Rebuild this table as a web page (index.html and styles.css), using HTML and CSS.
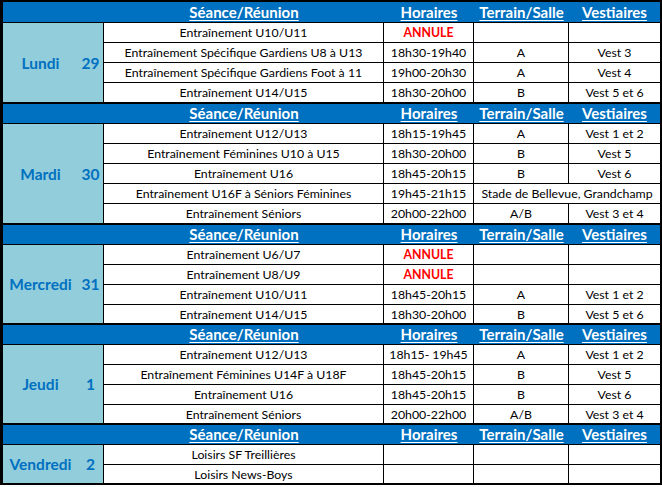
FILE: index.html
```html
<!DOCTYPE html>
<html lang="fr">
<head>
<meta charset="utf-8">
<title>Planning</title>
<link rel="stylesheet" href="styles.css">
</head>
<body>
<div class="sheet">
  <div class="block b1">
    <div class="head"><span></span><span class="h">Séance/Réunion</span><span class="h">Horaires</span><span class="h">Terrain/Salle</span><span class="h">Vestiaires</span></div>
    <div class="day r4"><span class="dn">Lundi</span><span class="dd">29</span></div>
    <div class="c">Entraînement U10/U11</div><div class="c annule">ANNULE</div><div class="c"></div><div class="c"></div>
    <div class="c">Entraînement Spécifique Gardiens U8 à U13</div><div class="c">18h30-19h40</div><div class="c">A</div><div class="c">Vest 3</div>
    <div class="c">Entraînement Spécifique Gardiens Foot à 11</div><div class="c">19h00-20h30</div><div class="c">A</div><div class="c">Vest 4</div>
    <div class="c">Entraînement U14/U15</div><div class="c">18h30-20h00</div><div class="c">B</div><div class="c">Vest 5 et 6</div>
  </div>
  <div class="block b2">
    <div class="head"><span></span><span class="h">Séance/Réunion</span><span class="h">Horaires</span><span class="h">Terrain/Salle</span><span class="h">Vestiaires</span></div>
    <div class="day r5"><span class="dn">Mardi</span><span class="dd">30</span></div>
    <div class="c">Entraînement U12/U13</div><div class="c">18h15-19h45</div><div class="c">A</div><div class="c">Vest 1 et 2</div>
    <div class="c">Entraînement Féminines U10 à U15</div><div class="c">18h30-20h00</div><div class="c">B</div><div class="c">Vest 5</div>
    <div class="c">Entraînement U16</div><div class="c">18h45-20h15</div><div class="c">B</div><div class="c">Vest 6</div>
    <div class="c">Entraînement U16F à Séniors Féminines</div><div class="c">19h45-21h15</div><div class="c wide">Stade de Bellevue, Grandchamp</div>
    <div class="c">Entraînement Séniors</div><div class="c">20h00-22h00</div><div class="c">A/B</div><div class="c">Vest 3 et 4</div>
  </div>
  <div class="block b4r">
    <div class="head"><span></span><span class="h">Séance/Réunion</span><span class="h">Horaires</span><span class="h">Terrain/Salle</span><span class="h">Vestiaires</span></div>
    <div class="day r4"><span class="dn">Mercredi</span><span class="dd">31</span></div>
    <div class="c">Entraînement U6/U7</div><div class="c annule">ANNULE</div><div class="c"></div><div class="c"></div>
    <div class="c">Entraînement U8/U9</div><div class="c annule">ANNULE</div><div class="c"></div><div class="c"></div>
    <div class="c">Entraînement U10/U11</div><div class="c">18h45-20h15</div><div class="c">A</div><div class="c">Vest 1 et 2</div>
    <div class="c">Entraînement U14/U15</div><div class="c">18h30-20h00</div><div class="c">B</div><div class="c">Vest 5 et 6</div>
  </div>
  <div class="block b4r">
    <div class="head"><span></span><span class="h">Séance/Réunion</span><span class="h">Horaires</span><span class="h">Terrain/Salle</span><span class="h">Vestiaires</span></div>
    <div class="day r4"><span class="dn">Jeudi</span><span class="dd">1</span></div>
    <div class="c">Entraînement U12/U13</div><div class="c">18h15- 19h45</div><div class="c">A</div><div class="c">Vest 1 et 2</div>
    <div class="c">Entraînement Féminines U14F à U18F</div><div class="c">18h45-20h15</div><div class="c">B</div><div class="c">Vest 5</div>
    <div class="c">Entraînement U16</div><div class="c">18h45-20h15</div><div class="c">B</div><div class="c">Vest 6</div>
    <div class="c">Entraînement Séniors</div><div class="c">20h00-22h00</div><div class="c">A/B</div><div class="c">Vest 3 et 4</div>
  </div>
  <div class="block b2r">
    <div class="head"><span></span><span class="h">Séance/Réunion</span><span class="h">Horaires</span><span class="h">Terrain/Salle</span><span class="h">Vestiaires</span></div>
    <div class="day r2"><span class="dn">Vendredi</span><span class="dd">2</span></div>
    <div class="c">Loisirs SF Treillières</div><div class="c"></div><div class="c"></div><div class="c"></div>
    <div class="c">Loisirs News-Boys</div><div class="c"></div><div class="c"></div><div class="c"></div>
  </div>
</div>
</body>
</html>
```
FILE: styles.css
```css
html, body {
  margin: 0;
  padding: 0;
  background: #ffffff;
}
body {
  font-family: Lato, "Liberation Sans", sans-serif;
  color: #000;
}
.sheet {
  width: 657px;
  background: #000;
  padding: 2px 2px 2px 3px;
  display: flex;
  flex-direction: column;
  gap: 2px;
}
.block {
  display: grid;
  grid-template-columns: 100px 279px 89px 94px 91px;
  grid-auto-rows: 19px;
  gap: 1px;
  background: #000;
}
.b1 { grid-template-rows: 20px repeat(4, 19px); }
.b2 { grid-template-rows: repeat(6, 19px); }
.b4r { grid-template-rows: repeat(4, 19px) 18px; }
.b2r { grid-template-rows: 19px 19px 18px; }
.head {
  grid-column: 1 / -1;
  grid-row: 1;
  background: #0070c0;
  display: grid;
  grid-template-columns: 101px 280px 90px 95px 91px;
  align-items: center;
}
.h {
  text-align: center;
  color: #fff;
  font-weight: 700;
  font-size: 15px;
  text-decoration: underline;
  text-decoration-thickness: 1px;
  text-underline-offset: 2px;
  line-height: 19px;
}
.day {
  grid-column: 1;
  background: #92cddc;
  display: grid;
  grid-template-columns: 75px 25px;
  align-items: center;
  color: #0070c0;
  font-weight: 700;
  font-size: 15.5px;
}
.r4 { grid-row: 2 / span 4; }
.r5 { grid-row: 2 / span 5; }
.r2 { grid-row: 2 / span 2; }
.dn, .dd { text-align: center; }
.c {
  background: #fff;
  font-size: 12.3px;
  line-height: 19px;
  text-align: center;
  white-space: nowrap;
  overflow: hidden;
  display: flex;
  align-items: center;
  justify-content: center;
}
.annule {
  color: #ff0000;
  font-weight: 700;
}
.wide {
  grid-column: 4 / span 2;
}
```
